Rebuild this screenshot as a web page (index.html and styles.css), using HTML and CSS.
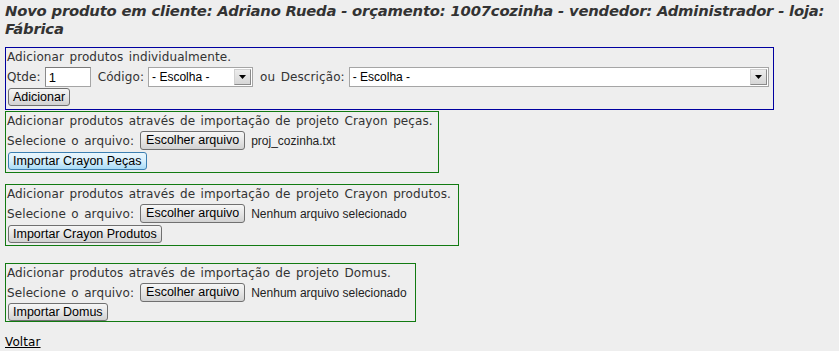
FILE: index.html
```html
<!DOCTYPE html>
<html lang="pt">
<head>
<meta charset="utf-8">
<title>Novo produto</title>
<link rel="stylesheet" href="styles.css">
</head>
<body>
<h1 class="title">Novo produto em cliente: Adriano Rueda - orçamento: 1007cozinha - vendedor: Administrador - loja:<br>Fábrica</h1>

<div class="box box-blue">
  <div class="line">Adicionar produtos individualmente.</div>
  <div class="row">
    <span>Qtde:</span>
    <span class="input qty">1</span>
    <span class="label">Código:</span>
    <span class="select sel-cod"><span class="sel-text">- Escolha -</span><span class="arrow"><svg width="7" height="4" viewBox="0 0 7 4"><path d="M0 0H7L3.5 4Z" fill="#000"/></svg></span></span>
    <span class="label">ou Descrição:</span>
    <span class="select sel-desc"><span class="sel-text">- Escolha -</span><span class="arrow"><svg width="7" height="4" viewBox="0 0 7 4"><path d="M0 0H7L3.5 4Z" fill="#000"/></svg></span></span>
  </div>
  <div class="row-btn"><span class="btn">Adicionar</span></div>
</div>

<div class="box box-green w1">
  <div class="line">Adicionar produtos através de importação de projeto Crayon peças.</div>
  <div class="row">
    <span>Selecione o arquivo:</span>
    <span class="btn file-btn">Escolher arquivo</span>
    <span class="file-name">proj_cozinha.txt</span>
  </div>
  <div class="row-btn"><span class="btn btn-focus">Importar Crayon Peças</span></div>
</div>

<div class="box box-green w2 gap1">
  <div class="line">Adicionar produtos através de importação de projeto Crayon produtos.</div>
  <div class="row">
    <span>Selecione o arquivo:</span>
    <span class="btn file-btn">Escolher arquivo</span>
    <span class="file-name">Nenhum arquivo selecionado</span>
  </div>
  <div class="row-btn"><span class="btn">Importar Crayon Produtos</span></div>
</div>

<div class="box box-green w3 gap2 short">
  <div class="line">Adicionar produtos através de importação de projeto Domus.</div>
  <div class="row">
    <span>Selecione o arquivo:</span>
    <span class="btn file-btn">Escolher arquivo</span>
    <span class="file-name">Nenhum arquivo selecionado</span>
  </div>
  <div class="row-btn"><span class="btn">Importar Domus</span></div>
</div>

<div class="back"><a href="#">Voltar</a></div>
</body>
</html>
```

FILE: styles.css
```css
html, body {
  margin: 0;
  padding: 0;
  background: #eeeeee;
}
body {
  padding: 2px 0 0 5px;
  font-family: "DejaVu Sans", Verdana, sans-serif;
  font-size: 12px;
  letter-spacing: 0.1px;
  word-spacing: 1.5px;
  color: #333;
  overflow: hidden;
}
.title {
  margin: 0;
  white-space: nowrap;
  font-size: 14.8px;
  font-weight: bold;
  font-style: italic;
  line-height: 18px;
  letter-spacing: -0.2px;
  word-spacing: 0;
  color: #333;
}
.box {
  border: 1px solid;
  box-sizing: border-box;
  padding: 0 2px 0 1px;
}
.box-blue {
  margin-top: 9px;
  border-color: #0000a0;
  width: 769px;
  height: 63px;
}
.box-green {
  border-color: #117a11;
  height: 62px;
}
.w1 { width: 434px; margin-top: 1px; }
.w2 { width: 454px; }
.w3 { width: 411px; }
.gap1 { margin-top: 11px; }
.gap2 { margin-top: 17px; }
.short { height: 59px; }
.short .row-btn { height: 18px; }
.line {
  height: 18px;
  line-height: 18px;
}
.row {
  height: 21px;
  display: flex;
  align-items: center;
  white-space: nowrap;
}
.row-btn {
  height: 20px;
  display: flex;
  align-items: center;
  padding-left: 1px;
}
.label { margin-left: 7px; }
.input, .select, .btn, .file-name {
  letter-spacing: normal;
  word-spacing: normal;
}
.input {
  box-sizing: border-box;
  height: 20px;
  background: #fff;
  border: 1px solid #a5a5a5;
  border-top-color: #7a7a7a;
  border-left-color: #8a8a8a;
  font-family: "Liberation Sans", Arial, sans-serif;
  font-size: 13px;
  line-height: 19px;
  padding: 0 3px;
  color: #000;
}
.qty { width: 46px; margin-left: 4px; }
.select {
  box-sizing: border-box;
  height: 20px;
  background: #fff;
  border: 1px solid #a5a5a5;
  display: flex;
  align-items: center;
  margin-left: 4px;
  font-family: "Liberation Sans", Arial, sans-serif;
  font-size: 12px;
  color: #000;
}
.sel-cod { width: 105px; }
.sel-desc { width: 420px; }
.sel-text { flex: 1; padding-left: 3px; }
.arrow {
  box-sizing: border-box;
  width: 17px;
  height: 16px;
  margin-right: 1px;
  border: 1px solid #8a8a8a;
  border-top-color: #d0d0d0;
  border-left-color: #d0d0d0;
  background: linear-gradient(#ececec, #d6d6d6);
  display: flex;
  align-items: center;
  justify-content: center;
}
.btn {
  display: inline-block;
  box-sizing: border-box;
  height: 18px;
  line-height: 16px;
  padding: 0 4px;
  border: 1px solid #707070;
  border-radius: 3px;
  background: linear-gradient(#f6f6f6 0%, #e6e6e6 50%, #d2d2d2 100%);
  font-family: "Liberation Sans", Arial, sans-serif;
  font-size: 12.5px;
  color: #000;
  white-space: nowrap;
}
.btn-focus {
  border-color: #3c7fb1;
  background: linear-gradient(#eaf6fd 0%, #d7effc 50%, #a9dbf6 100%);
}
.file-btn {
  margin-left: 6px;
  height: 19px;
  line-height: 17px;
  padding: 0 5px;
}
.file-name {
  margin-left: 6px;
  font-family: "Liberation Sans", Arial, sans-serif;
  font-size: 12px;
  color: #222;
}
.back {
  margin-top: 13px;
  font-size: 12px;
}
.back a {
  color: #000;
  text-decoration: underline;
}
```
